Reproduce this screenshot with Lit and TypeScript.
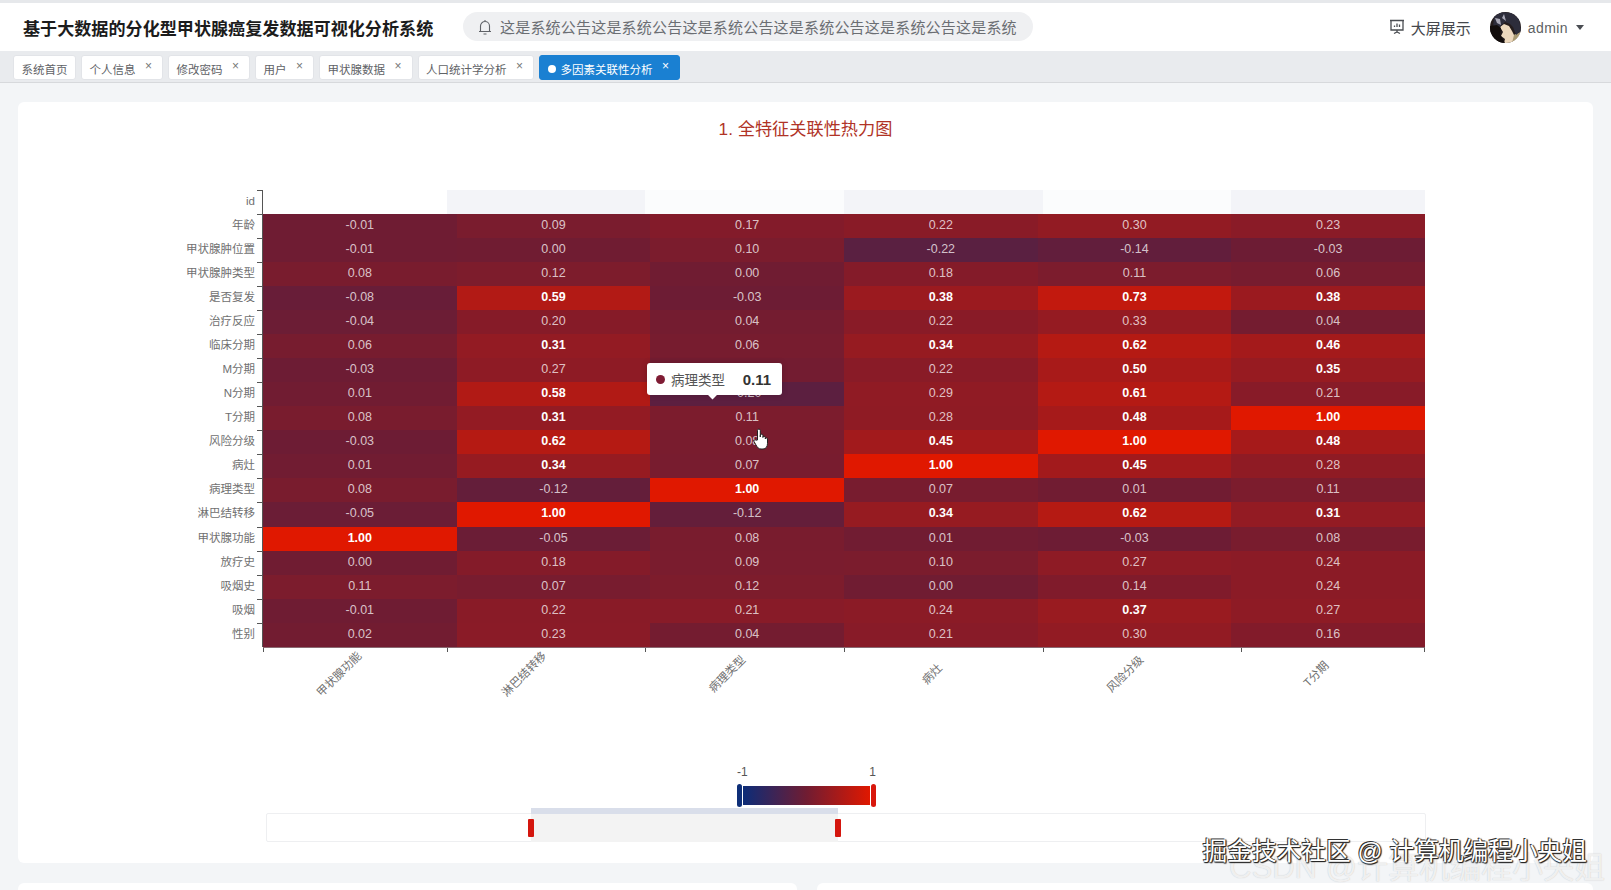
import { LitElement, html, css, nothing } from 'lit'
import { customElement } from 'lit/decorators.js'

const tabs = ['系统首页', '个人信息', '修改密码', '用户', '甲状腺数据', '人口统计学分析', '多因素关联性分析']

const rows: [string, number[]][] = [
  ['年龄', [-0.01, 0.09, 0.17, 0.22, 0.3, 0.23]],
  ['甲状腺肿位置', [-0.01, 0, 0.1, -0.22, -0.14, -0.03]],
  ['甲状腺肿类型', [0.08, 0.12, 0, 0.18, 0.11, 0.06]],
  ['是否复发', [-0.08, 0.59, -0.03, 0.38, 0.73, 0.38]],
  ['治疗反应', [-0.04, 0.2, 0.04, 0.22, 0.33, 0.04]],
  ['临床分期', [0.06, 0.31, 0.06, 0.34, 0.62, 0.46]],
  ['M分期', [-0.03, 0.27, 0.03, 0.22, 0.5, 0.35]],
  ['N分期', [0.01, 0.58, -0.2, 0.29, 0.61, 0.21]],
  ['T分期', [0.08, 0.31, 0.11, 0.28, 0.48, 1]],
  ['风险分级', [-0.03, 0.62, 0.08, 0.45, 1, 0.48]],
  ['病灶', [0.01, 0.34, 0.07, 1, 0.45, 0.28]],
  ['病理类型', [0.08, -0.12, 1, 0.07, 0.01, 0.11]],
  ['淋巴结转移', [-0.05, 1, -0.12, 0.34, 0.62, 0.31]],
  ['甲状腺功能', [1, -0.05, 0.08, 0.01, -0.03, 0.08]],
  ['放疗史', [0, 0.18, 0.09, 0.1, 0.27, 0.24]],
  ['吸烟史', [0.11, 0.07, 0.12, 0, 0.14, 0.24]],
  ['吸烟', [-0.01, 0.22, 0.21, 0.24, 0.37, 0.27]],
  ['性别', [0.02, 0.23, 0.04, 0.21, 0.3, 0.16]]
]

const xLabels = ['甲状腺功能', '淋巴结转移', '病理类型', '病灶', '风险分级', 'T分期']

// visual map ramp: dark blue at -1, maroon at 0, red at 1
function heat(v: number) {
  const [from, to] = v < 0 ? [[12, 44, 120], [112, 28, 50]] : [[112, 28, 50], [224, 24, 0]]
  const t = v < 0 ? v + 1 : v
  const c = from.map((a, i) => Math.round(a + (to[i] - a) * t))
  return `rgb(${c.join(', ')})`
}

@customElement('app-root')
export class AppRoot extends LitElement {
  static styles = css`
    * {
      box-sizing: border-box;
    }
    :host {
      display: block;
      height: 890px;
      overflow: hidden;
      background: #f3f5f7;
      font-family: "Liberation Sans", "Noto Sans CJK SC", sans-serif;
      position: relative;
    }
    .topline {
      height: 3px;
      background: #e6e8eb;
    }
    .header {
      height: 48px;
      background: #fff;
      display: flex;
      align-items: center;
      padding: 0 27px 0 23px;
    }
    .title {
      width: 440px;
      font-size: 17.1px;
      font-weight: 700;
      color: #1c1c1c;
      white-space: nowrap;
    }
    .notice {
      width: 570px;
      height: 29px;
      border-radius: 15px;
      background: #eff0f2;
      display: flex;
      align-items: center;
      gap: 8px;
      padding-left: 15px;
      font-size: 15px;
      letter-spacing: 0.2px;
      color: #6b6e73;
      white-space: nowrap;
      margin-top: -1px;
    }
    .right {
      margin-left: auto;
      display: flex;
      align-items: center;
      font-size: 15px;
      color: #44474c;
    }
    .screen {
      display: flex;
      align-items: center;
      gap: 6px;
      margin-right: 19px;
    }
    .avatar {
      width: 31px;
      height: 31px;
      margin-right: 7px;
    }
    .name {
      font-size: 14px;
      letter-spacing: 0.4px;
      color: #5c5f64;
      margin-top: 1px;
    }
    .caret {
      width: 0;
      height: 0;
      margin-left: 8px;
      border: 4px solid transparent;
      border-top: 5px solid #4a4d52;
      border-bottom: 0;
    }
    .tabs {
      height: 32px;
      background: #e9ebee;
      border-bottom: 1px solid #d7d9dc;
      display: flex;
      gap: 5px;
      padding: 4px 0 0 13px;
    }
    .tab {
      height: 25px;
      padding: 0 7.5px;
      background: #fff;
      border: 1px solid #e2e4e8;
      border-radius: 3px;
      display: flex;
      align-items: flex-start;
      font-size: 11.5px;
      line-height: 28px;
      color: #606266;
      white-space: nowrap;
    }
    .tab.closable {
      padding-right: 9.5px;
    }
    .tab .x {
      width: 8px;
      margin-left: 9px;
      font-size: 12px;
      line-height: 20px;
      text-align: center;
      color: #777;
    }
    .tab.active {
      background: #1a80d2;
      border-color: #1a80d2;
      color: #fff;
    }
    .tab.active .x {
      color: #fff;
    }
    .dot {
      width: 8px;
      height: 8px;
      border-radius: 50%;
      background: #fff;
      margin: 9px 5px 0 0;
    }
    .content {
      padding: 19px 18px 0;
    }
    .card {
      height: 761px;
      background: #fff;
      border-radius: 6px;
      padding-top: 17px;
      position: relative;
    }
    .card-title {
      text-align: center;
      font-size: 17.2px;
      line-height: 20px;
      color: #b03326;
    }
    .heat {
      display: grid;
      grid-template-columns: 245px repeat(6, 193.67px);
      grid-template-rows: 23.5px repeat(18, 24.09px);
      margin-top: 51px;
    }
    .ylabel {
      font-size: 11.5px;
      color: #707070;
      text-align: right;
      padding-right: 7px;
      line-height: 23px;
      position: relative;
      border-right: 1px solid #555;
      white-space: nowrap;
    }
    .ylabel::after {
      content: '';
      position: absolute;
      right: 0;
      top: 0;
      width: 5px;
      height: 1px;
      background: #555;
    }
    .bands {
      grid-column: 2 / span 6;
      display: grid;
      grid-template-columns: 184px 198px 199px 199px 188px 194px;
    }
    .bands div:nth-child(even) {
      background: #f3f4f8;
    }
    .bands div:nth-child(odd) {
      background: #fbfcfd;
    }
    .bands div:first-child {
      background: #fff;
    }
    .cell {
      text-align: center;
      font-size: 12.5px;
      line-height: 23px;
      color: rgba(255, 255, 255, 0.74);
    }
    .cell.strong {
      color: #fff;
      font-weight: 700;
    }
    .xticks {
      display: grid;
      grid-template-columns: 184px 198px 199px 199px 198px 184px;
      margin-left: 245px;
      width: 1162px;
      height: 5px;
      border-top: 1px solid #8a6a72;
      border-right: 1px solid #555;
    }
    .xticks div {
      border-left: 1px solid #555;
    }
    .xlabels {
      display: grid;
      grid-template-columns: 152px 218px 188px 222px 164px 218px;
      align-items: start;
      margin-left: 245px;
      width: 1162px;
      height: 64px;
      padding-top: 15px;
    }
    .xlabels div {
      height: 14px;
      text-align: center;
      font-size: 11.5px;
      line-height: 14px;
      color: #707070;
      transform: rotate(-45deg);
      white-space: nowrap;
    }
    .vm {
      margin: 49px 0 0 719px;
      width: 139px;
    }
    .vm-labels {
      display: flex;
      justify-content: space-between;
      font-size: 12px;
      line-height: 14px;
      color: #555;
    }
    .vm-bar {
      display: flex;
      height: 23px;
      margin-top: 5px;
      align-items: center;
    }
    .vm-bar .ramp {
      width: 127px;
      height: 19px;
      margin: 0 1px;
      background: linear-gradient(90deg, rgb(12, 44, 120), rgb(112, 28, 50) 50%, rgb(224, 24, 0));
    }
    .vm-bar .grip {
      width: 5px;
      height: 23px;
      border-radius: 3px;
    }
    .grip.lo {
      background: #0e2f78;
    }
    .grip.hi {
      background: #d8170c;
    }
    .dz {
      margin: 6.5px 0 0 248px;
      width: 1160px;
      height: 29px;
      border: 1px solid #eeeff1;
      border-radius: 2px;
      padding-left: 264px;
    }
    .dz-sel {
      width: 307px;
      height: 34px;
      margin-top: -6px;
      border-top: 6px solid #d9deea;
      background: #f3f3f3;
      position: relative;
    }
    .dz-handle {
      position: absolute;
      top: 5px;
      width: 6px;
      height: 18px;
      background: #d4160e;
      border-radius: 1px;
    }
    .dz-handle.l {
      left: -3px;
    }
    .dz-handle.r {
      right: -3px;
    }
    .lower {
      display: grid;
      grid-template-columns: 779px 776px;
      gap: 20px;
      margin-top: 20px;
    }
    .lower div {
      height: 40px;
      background: #fff;
      border-radius: 6px;
    }
    .tooltip {
      position: absolute;
      left: 629px;
      top: 261px;
      width: 135px;
      height: 32px;
      background: #fff;
      border-radius: 3px;
      box-shadow: 0 0 6px rgba(0, 0, 0, 0.18);
      display: flex;
      align-items: center;
      padding: 0 11px 0 9px;
      font-size: 13.5px;
      color: #555;
    }
    .tooltip::after {
      content: '';
      position: absolute;
      left: 62px;
      bottom: -3px;
      width: 7px;
      height: 7px;
      background: #fff;
      transform: rotate(45deg);
    }
    .tooltip i {
      width: 9px;
      height: 9px;
      border-radius: 50%;
      background: #7f1c34;
      margin-right: 6px;
    }
    .tooltip b {
      margin-left: auto;
      font-size: 15px;
      color: #333;
    }
    .hand {
      position: absolute;
      left: 735px;
      top: 326px;
    }
    .wm {
      position: absolute;
      white-space: nowrap;
    }
    .wm.back {
      right: 6px;
      top: 850px;
      font-size: 31px;
      line-height: 36px;
      color: rgba(255, 255, 255, 0.75);
      text-shadow: 0 0 1px rgba(110, 110, 110, 0.4);
    }
    .wm.front {
      right: 24px;
      top: 837px;
      font-size: 24.7px;
      line-height: 30px;
      color: #fff;
      text-shadow: -1px -1px 0 #333, 1px 1px 1px #222, 1px 0 1px #333, 0 1px 1px #333;
    }
  `

  render() {
    return html`
      <div class="topline"></div>
      <header class="header">
        <div class="title">基于大数据的分化型甲状腺癌复发数据可视化分析系统</div>
        <div class="notice">
          <svg width="14" height="16" viewBox="0 0 14 16" fill="none" stroke="#5f6267" stroke-width="1.1">
            <path d="M2.500 12V7a4.500 4.500 0 0 1 9 0v5M1 12.500h12M7 1v1.400M5.500 15h3" />
          </svg>
          这是系统公告这是系统公告这是系统公告这是系统公告这是系统公告这是系统
        </div>
        <div class="right">
          <div class="screen">
            <svg width="16" height="16" viewBox="0 0 16 16" fill="none" stroke="#4a4d52" stroke-width="1.3">
              <path d="M1 1.500h14M2 1.500v9.500h12V1.500M8 11v2M5 14.500l3-1.500 3 1.500" />
              <path d="M5.500 8V6.500M8 8V4.500M10.500 8V5.500" />
            </svg>
            大屏展示
          </div>
          <svg class="avatar" viewBox="0 0 31 31">
            <defs><clipPath id="av"><circle cx="15.500" cy="15.500" r="15.500" /></clipPath></defs>
            <g clip-path="url(#av)">
              <rect width="31" height="31" fill="#241c1c" />
              <path d="M10 15l4-3 5 2 3 5 2 4 7-3v11H14l1-4-4-3 2-4z" fill="#ecd8bd" />
              <path d="M24 23l7-3v11H22z" fill="#a99a72" />
              <path d="M4 4l7-4 11 1 7 6 2 12-5 4-3-8-3-3-5-2-5 5-7 1z" fill="#2d2d3b" />
              <path d="M5 6l5 1 1 6-4-2zM14 2l2 7-4-3z" fill="#a9a8b6" />
              <path d="M0 14l7-1 4 3-1 6 5 9H0z" fill="#120d0c" />
            </g>
          </svg>
          <span class="name">admin</span>
          <span class="caret"></span>
        </div>
      </header>
      <nav class="tabs">
        ${tabs.map((t, i) => {
          const active = i === tabs.length - 1
          return html`<div class="tab ${active ? 'active' : ''} ${i > 0 ? 'closable' : ''}">
            ${active ? html`<span class="dot"></span>` : nothing}${t}${i > 0 ? html`<span class="x">×</span>` : nothing}
          </div>`
        })}
      </nav>
      <main class="content">
        <section class="card">
          <div class="card-title">1. 全特征关联性热力图</div>
          <div class="heat">
            <div class="ylabel">id</div>
            <div class="bands"><div></div><div></div><div></div><div></div><div></div><div></div></div>
            ${rows.map(
              ([name, vals]) => html`
                <div class="ylabel">${name}</div>
                ${vals.map(
                  (v) => html`<div class="cell ${v > 0.3 && v !== 0.33 ? 'strong' : ''}" style="background:${heat(v)}">${v.toFixed(2)}</div>`
                )}
              `
            )}
          </div>
          <div class="xticks"><div></div><div></div><div></div><div></div><div></div><div></div></div>
          <div class="xlabels">${xLabels.map((l) => html`<div>${l}</div>`)}</div>
          <div class="vm">
            <div class="vm-labels"><span>-1</span><span>1</span></div>
            <div class="vm-bar"><span class="grip lo"></span><span class="ramp"></span><span class="grip hi"></span></div>
          </div>
          <div class="dz">
            <div class="dz-sel"><span class="dz-handle l"></span><span class="dz-handle r"></span></div>
          </div>
          <div class="tooltip"><i></i>病理类型<b>0.11</b></div>
          <svg class="hand" width="16" height="22" viewBox="0 0 16 22">
            <path d="M4.500 12V2.500a1.400 1.400 0 0 1 2.800 0V9V7.500a1.300 1.300 0 0 1 2.600 0V9.500a1.200 1.200 0 0 1 2.400 0V11a1.100 1.100 0 0 1 2.200 0v4.500c0 3-1.500 5.500-4.500 5.500H8c-2.500 0-3.500-1.500-5-4L1 13.500c-.6-1.200 1-2.300 2-1.300z" fill="#fff" stroke="#222" stroke-width="1" />
          </svg>
        </section>
        <div class="lower"><div></div><div></div></div>
      </main>
      <div class="wm back">CSDN @计算机编程小央姐</div>
      <div class="wm front">掘金技术社区 @ 计算机编程小央姐</div>
    `
  }
}
